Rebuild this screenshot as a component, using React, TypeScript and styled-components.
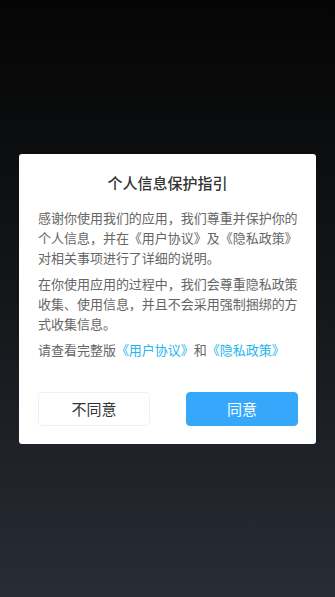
import React from 'react';
import styled, { createGlobalStyle } from 'styled-components';

const GlobalStyle = createGlobalStyle`
  html, body, #root {
    margin: 0;
    padding: 0;
    height: 100%;
  }

  body {
    font-family: "Noto Sans CJK SC", "Noto Sans", sans-serif;
  }
`;

const Screen = styled.div`
  height: 100%;
  min-height: 597px;
  display: flex;
  align-items: center;
  justify-content: center;
  background: linear-gradient(to bottom, #050505 0%, #121416 45%, #282c35 100%);
`;

const Dialog = styled.div`
  width: 297px;
  box-sizing: border-box;
  background: #fff;
  border-radius: 3px;
  padding: 16px 18px 18px 18px;
  display: flex;
  flex-direction: column;
`;

const Title = styled.h2`
  margin: 0 0 12px;
  text-align: center;
  font-size: 15px;
  font-weight: 500;
  line-height: 26px;
  color: #333;
`;

const Paragraph = styled.p`
  margin: 0 0 6px;
  padding-left: 1px;
  font-size: 13px;
  line-height: 20px;
  color: #666;
  letter-spacing: -0.02px;
`;

const Link = styled.span`
  color: #22b6ef;
`;

const Actions = styled.div`
  display: flex;
  justify-content: space-between;
  margin-top: 26px;
  padding-left: 1px;
`;

const Button = styled.button<{ $primary?: boolean }>`
  width: 112px;
  height: 34px;
  border-radius: 4px;
  font-family: inherit;
  font-size: 15px;
  cursor: pointer;
  border: 1px solid ${(p) => (p.$primary ? '#36a8fb' : '#eef0f2')};
  background: ${(p) => (p.$primary ? '#36a8fb' : '#fff')};
  color: ${(p) => (p.$primary ? '#fff' : '#333')};
`;

const App = (): JSX.Element => (
  <>
    <GlobalStyle />
    <Screen>
      <Dialog>
        <Title>个人信息保护指引</Title>
        <Paragraph>
          感谢你使用我们的应用，我们尊重并保护你的个人信息，并在《用户协议》及《隐私政策》对相关事项进行了详细的说明。
        </Paragraph>
        <Paragraph>
          在你使用应用的过程中，我们会尊重隐私政策收集、使用信息，并且不会采用强制捆绑的方式收集信息。
        </Paragraph>
        <Paragraph>
          请查看完整版<Link>《用户协议》</Link>和<Link>《隐私政策》</Link>
        </Paragraph>
        <Actions>
          <Button>不同意</Button>
          <Button $primary>同意</Button>
        </Actions>
      </Dialog>
    </Screen>
  </>
);

export default App;
